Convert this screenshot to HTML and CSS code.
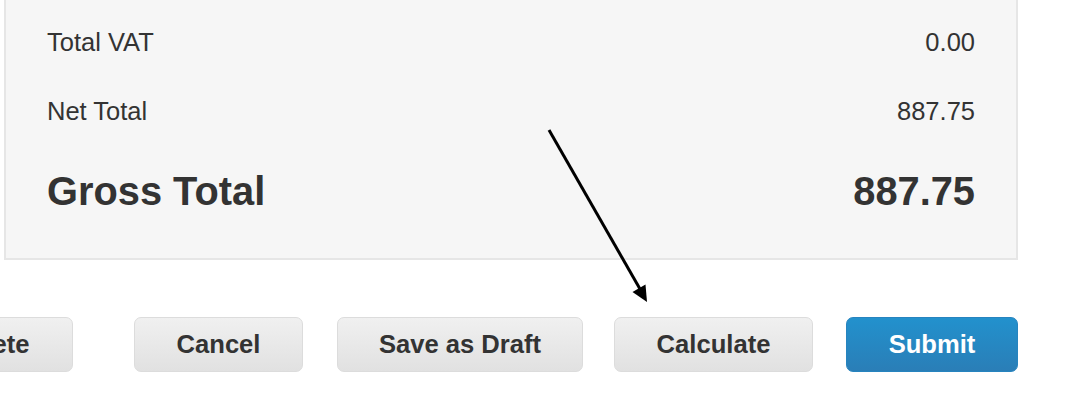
FILE: index.html
```html
<!DOCTYPE html>
<html>
<head>
<meta charset="utf-8">
<link rel="stylesheet" href="styles.css">
</head>
<body>
<div class="page">
  <div class="totals">
    <div class="row"><span>Total VAT</span><span>0.00</span></div>
    <div class="row"><span>Net Total</span><span>887.75</span></div>
    <div class="row gross"><span>Gross Total</span><span>887.75</span></div>
  </div>
  <div class="actions">
    <button class="btn delete">Delete</button>
    <button class="btn cancel">Cancel</button>
    <button class="btn draft">Save as Draft</button>
    <button class="btn calc">Calculate</button>
    <button class="btn primary">Submit</button>
  </div>
  <svg class="arrow" width="1084" height="418" viewBox="0 0 1084 418">
    <line x1="549" y1="130" x2="640" y2="289" stroke="#000" stroke-width="3"/>
    <polygon points="647,302 632.5,292 645.5,284.5" fill="#000"/>
  </svg>
</div>
</body>
</html>
```
FILE: styles.css
```css
html, body {
  margin: 0;
  padding: 0;
  background: #fff;
  overflow: hidden;
}
.page {
  position: relative;
  display: flow-root;
  width: 1084px;
  height: 418px;
  font-family: "Liberation Sans", Arial, Helvetica, sans-serif;
  color: #333;
}
.totals {
  box-sizing: border-box;
  margin: -30px 0 0 4px;
  width: 1014px;
  background: #f6f6f6;
  border: 2px solid #e6e6e6;
  padding: 36px 41px 21px 41px;
  display: flex;
  flex-direction: column;
}
.row {
  display: flex;
  justify-content: space-between;
  font-size: 25.5px;
  line-height: 69px;
  height: 69px;
}
.row.gross {
  font-size: 39.8px;
  font-weight: bold;
  line-height: 91px;
  height: 91px;
}
.actions {
  margin: 57px 0 0 4px;
  width: 1014px;
  display: flex;
  justify-content: flex-end;
}
.btn {
  flex: none;
  box-sizing: border-box;
  height: 55px;
  padding: 0;
  font-family: "Liberation Sans", Arial, Helvetica, sans-serif;
  font-size: 25.6px;
  font-weight: bold;
  color: #333;
  background: linear-gradient(#f0f0f0, #e1e1e1);
  border: 1px solid #dcdcdc;
  border-radius: 7px;
  white-space: nowrap;
  text-align: center;
}
.btn.delete { width: 164px; }
.btn.cancel { width: 169px; margin-left: 61px; }
.btn.draft { width: 246px; margin-left: 34px; }
.btn.calc { width: 199px; margin-left: 31px; }
.btn.primary {
  width: 172px;
  margin-left: 33px;
  color: #fff;
  background: linear-gradient(#2291cd, #2a7eb7);
  border-color: #2784bf;
}
.arrow {
  position: absolute;
  left: 0;
  top: 0;
  pointer-events: none;
}
```
